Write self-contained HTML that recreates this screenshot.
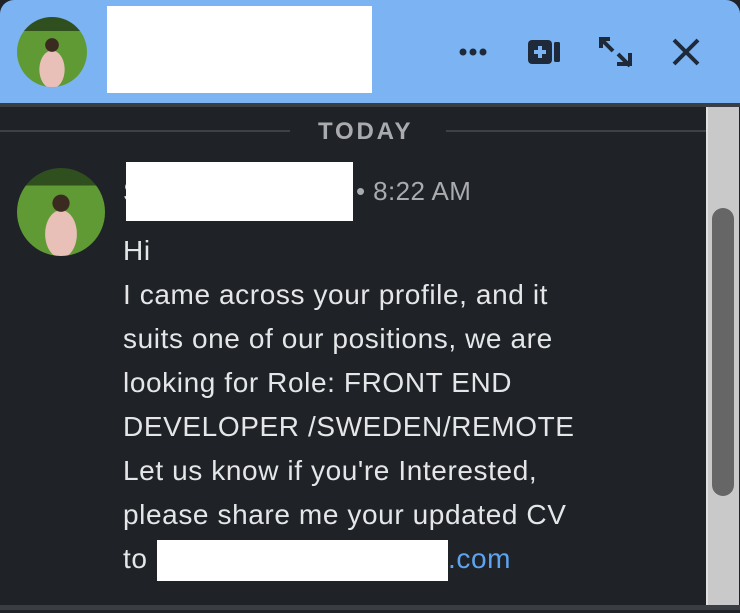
<!DOCTYPE html>
<html><head><style>
body{margin:0;width:740px;height:613px;background:#1f2227;font-family:"Liberation Sans",sans-serif;position:relative;overflow:hidden}
.hdr{position:absolute;left:0;top:0;width:740px;height:103px;background:#7bb3f3;border-radius:14px 14px 0 0}
.line{position:absolute;left:0;top:103px;width:740px;height:4px;background:#3a3e44}
.av{position:absolute;border-radius:50%;background:radial-gradient(circle at 50% 40%,#3a2a20 0 12%,transparent 13%),radial-gradient(ellipse at 50% 75%,#e8c0b8 0 25%,transparent 26%),linear-gradient(#2f4f1f 0 20%,#5f9a35 20% 100%)}
.w{position:absolute;background:#fff}
.t{position:absolute;color:#e4e6e8;font-size:28px;letter-spacing:0.6px;left:123px;line-height:44px}
</style></head><body>
<div class="hdr"></div>
<div class="line"></div>
<div class="av" style="left:17px;top:17px;width:70px;height:70px"></div>
<div class="w" style="left:107px;top:6px;width:265px;height:87px"></div>
<svg style="position:absolute;left:0;top:0" width="740" height="103">
<g fill="#1e2a3a"><circle cx="463" cy="52" r="3.5"/><circle cx="473" cy="52" r="3.5"/><circle cx="483" cy="52" r="3.5"/>
<rect x="528" y="40" width="24" height="24" rx="4"/><rect x="554" y="42" width="6" height="20" rx="1.5"/></g>
<path d="M534 52h12M540 46v12" stroke="#7bb3f3" stroke-width="4"/>
<g stroke="#1e2a3a" stroke-width="4" fill="none"><path d="M601 37v11M599 39h11M601 39l12 12M630 66l-12-12M630 53v13M617 64h15"/>
<path d="M674 40l24 24M698 40l-24 24"/></g>
</svg>
<div style="position:absolute;left:0;top:130px;width:290px;height:2px;background:#3e4247"></div>
<div style="position:absolute;left:446px;top:130px;width:260px;height:2px;background:#3e4247"></div>
<div style="position:absolute;left:318px;top:118px;font-size:24px;font-weight:bold;color:#a9abae;letter-spacing:2.8px">TODAY</div>
<div class="av" style="left:17px;top:168px;width:88px;height:88px"></div>
<div style="position:absolute;left:123px;top:176px;font-size:28px;color:#e4e6e8">S</div>
<div class="w" style="left:126px;top:162px;width:227px;height:59px"></div>
<div style="position:absolute;left:356px;top:176px;font-size:26px;letter-spacing:0.4px;color:#a9abae">• 8:22 AM</div>
<div class="t" style="top:229px">Hi<br>I came across your profile, and it<br>suits one of our positions, we are<br>looking for Role: FRONT END<br>DEVELOPER /SWEDEN/REMOTE<br>Let us know if you're Interested,<br>please share me your updated CV<br>to</div>
<div class="w" style="left:157px;top:540px;width:291px;height:41px"></div>
<div class="t" style="left:448px;top:537px;color:#5ea3ef">.com</div>
<div style="position:absolute;left:706px;top:107px;width:31px;height:498px;background:#c9c9c9;border-left:2px solid #e0e0e0"></div>
<div style="position:absolute;left:712px;top:208px;width:22px;height:288px;background:#666;border-radius:11px"></div>
<div style="position:absolute;left:0;top:605px;width:740px;height:5px;background:#3a3d41"></div>
</body></html>
